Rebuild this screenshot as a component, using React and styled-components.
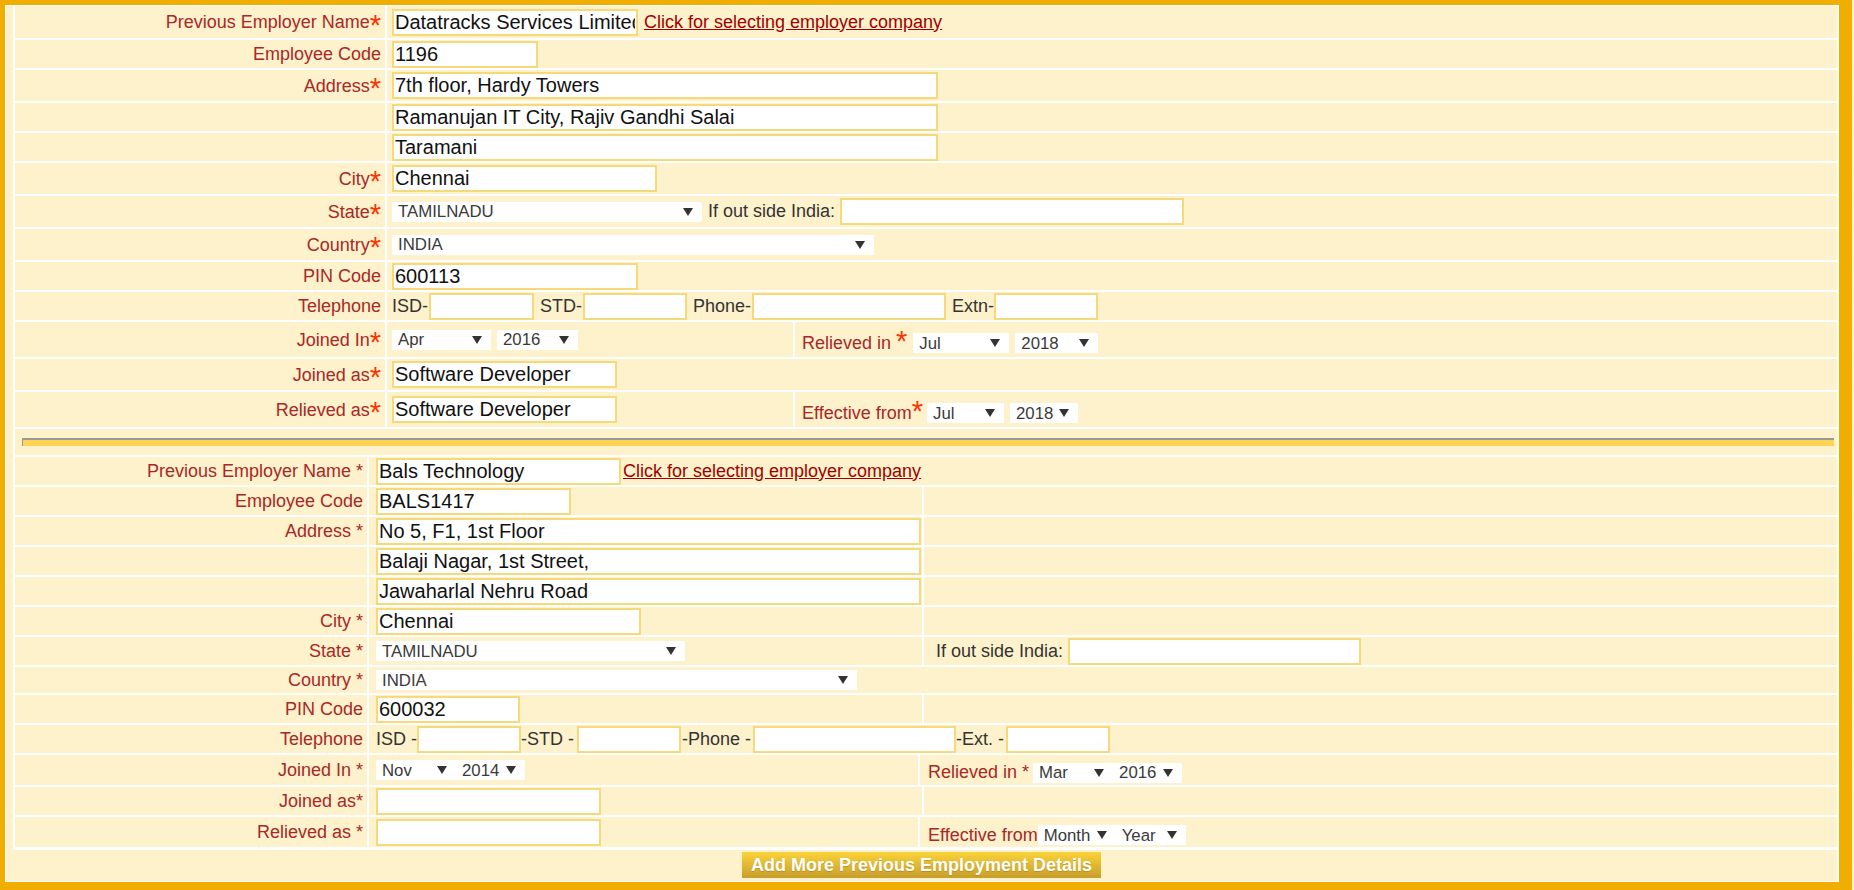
import React from "react";
import styled, { createGlobalStyle } from "styled-components";

const GlobalStyle = createGlobalStyle`
  html, body {
    margin: 0;
    padding: 0;
    background: #fef2cc;
  }
  body {
    font-family: "Liberation Sans", Arial, sans-serif;
    overflow: hidden;
  }
`;

const Frame = styled.div`
  width: 1852px;
  box-sizing: border-box;
  padding: 5px 13px 8px 5px;
  background: #f0af00;
`;

const Panel = styled.div`
  border: 1px solid #fff;
  border-right-width: 2px;
  background: #fef2cc;
`;

const Section = styled.div`
  margin-left: 7px;
  display: flex;
  flex-direction: column;
  gap: 2px;
  background: #fff;
  border-left: 2px solid #fff;
  border-top: ${(p) => p.$top || 0}px solid #fff;
  border-bottom: ${(p) => p.$bottom || 0}px solid #fff;
`;

const Row = styled.div`
  display: grid;
  grid-template-columns: ${(p) => p.$cols};
  column-gap: 2px;
  height: ${(p) => p.$h}px;
`;

const LabelCell = styled.div`
  background: #fef2cc;
  display: flex;
  align-items: center;
  justify-content: flex-end;
  padding: 1px 4px 0 0;
  color: #a82828;
  font-size: 18px;
  white-space: nowrap;
`;

const Cell = styled.div`
  background: #fef2cc;
  display: flex;
  align-items: center;
  gap: ${(p) => p.$gap || 0}px;
  padding-left: ${(p) => p.$pad ?? 5}px;
  padding-top: ${(p) => p.$drop || 0}px;
  font-size: 18px;
  color: #333;
  white-space: nowrap;
  min-width: 0;
  overflow: hidden;
`;

const FieldLabel = styled.span`
  color: #a82828;
`;

const Star = styled.span`
  color: #ff3300;
  font-size: 29px;
  line-height: 0;
  position: relative;
  top: 2px;
`;

const Group = styled.span`
  display: inline-flex;
  align-items: center;
  margin-left: ${(p) => p.$ml || 0}px;
`;

const TextInput = styled.input`
  box-sizing: border-box;
  flex: none;
  width: ${(p) => p.$w}px;
  height: 27px;
  margin: 0 ${(p) => p.$mx || 0}px 0 ${(p) => p.$ml ?? p.$mx ?? 0}px;
  padding: 0 1px;
  border: 2px solid #f6da7a;
  background: #fff;
  font: 20px "Liberation Sans", Arial, sans-serif;
  color: #111;
  outline: none;
`;

const PickLink = styled.a`
  margin-left: ${(p) => p.$gap}px;
  color: #a00000;
  font-size: 18px;
  text-decoration: underline;
  cursor: pointer;
`;

const SelectWrap = styled.span`
  position: relative;
  flex: none;
  display: inline-block;
  width: ${(p) => p.$w}px;
  height: 20px;
  margin-left: ${(p) => p.$ml || 0}px;
  background: #fff;
`;

const NativeSelect = styled.select`
  appearance: none;
  -webkit-appearance: none;
  display: block;
  width: 100%;
  height: 100%;
  margin: 0;
  padding: 0 0 0 6px;
  border: none;
  border-radius: 0;
  outline: none;
  background: transparent;
  font: 16.8px "Liberation Sans", Arial, sans-serif;
  color: #3a3a3a;
`;

const Caret = styled.svg`
  position: absolute;
  right: 9px;
  top: 6px;
  pointer-events: none;
`;

const RuleCell = styled.div`
  grid-column: 1 / -1;
  background: #fef2cc;
  padding: 9px 3px 0 7px;
`;

const Rule = styled.div`
  height: 6px;
  background: #ffd452;
  border-top: 2px solid #9a9a9a;
  border-left: 1px solid #9a9a9a;
`;

const ButtonRow = styled.div`
  height: 31px;
  box-sizing: border-box;
  padding-top: 2px;
  display: flex;
  justify-content: center;
  align-items: flex-start;
`;

const AddButton = styled.button`
  height: 26px;
  padding: 0 9px;
  border: none;
  border-radius: 0;
  background: linear-gradient(#fad33a, #c89e2b);
  color: #fff;
  font: bold 18px "Liberation Sans", Arial, sans-serif;
  text-shadow: 0 1px 1px rgba(90, 60, 0, 0.25);
  cursor: pointer;
`;

const MONTHS = ["Jan", "Feb", "Mar", "Apr", "May", "Jun", "Jul", "Aug", "Sep", "Oct", "Nov", "Dec"];
const YEARS = ["2010", "2011", "2012", "2013", "2014", "2015", "2016", "2017", "2018", "2019"];
const STATES = ["ANDHRA PRADESH", "KARNATAKA", "KERALA", "MAHARASHTRA", "TAMILNADU", "TELANGANA"];

function Select({ w, ml, value, options }) {
  const list = options.includes(value) ? options : [value, ...options];
  return (
    <SelectWrap $w={w} $ml={ml}>
      <NativeSelect defaultValue={value}>
        {list.map((o) => (
          <option key={o}>{o}</option>
        ))}
      </NativeSelect>
      <Caret width="10" height="8" viewBox="0 0 10 8">
        <polygon points="0,0 10,0 5,8" fill="#333" />
      </Caret>
    </SelectWrap>
  );
}

const TOP = "370px 1fr";
const TOP_SPLIT = "370px 406px 1fr";
const BOT = "352px 553px 1fr";
const BOT_SPAN = "352px 1fr";
const BOT_SPLIT = "352px 549px 1fr";

function Req({ children }) {
  return (
    <>
      {children}
      <Star>*</Star>
    </>
  );
}

function FirstEmployer() {
  return (
    <Section>
      <Row $cols={TOP} $h={32}>
        <LabelCell><Req>Previous Employer Name</Req></LabelCell>
        <Cell>
          <TextInput $w={246} defaultValue="Datatracks Services Limited" />
          <PickLink $gap={6}>Click for selecting employer company</PickLink>
        </Cell>
      </Row>
      <Row $cols={TOP} $h={28}>
        <LabelCell>Employee Code</LabelCell>
        <Cell><TextInput $w={146} defaultValue="1196" /></Cell>
      </Row>
      <Row $cols={TOP} $h={31}>
        <LabelCell><Req>Address</Req></LabelCell>
        <Cell><TextInput $w={546} defaultValue="7th floor, Hardy Towers" /></Cell>
      </Row>
      <Row $cols={TOP} $h={28}>
        <LabelCell />
        <Cell><TextInput $w={546} defaultValue="Ramanujan IT City, Rajiv Gandhi Salai" /></Cell>
      </Row>
      <Row $cols={TOP} $h={28}>
        <LabelCell />
        <Cell><TextInput $w={546} defaultValue="Taramani" /></Cell>
      </Row>
      <Row $cols={TOP} $h={31}>
        <LabelCell><Req>City</Req></LabelCell>
        <Cell><TextInput $w={265} defaultValue="Chennai" /></Cell>
      </Row>
      <Row $cols={TOP} $h={31}>
        <LabelCell><Req>State</Req></LabelCell>
        <Cell>
          <Select w={310} value="TAMILNADU" options={STATES} />
          <Group $ml={6}>If out side India:</Group>
          <TextInput $w={344} $ml={5} />
        </Cell>
      </Row>
      <Row $cols={TOP} $h={31}>
        <LabelCell><Req>Country</Req></LabelCell>
        <Cell><Select w={482} value="INDIA" options={["INDIA", "OTHERS"]} /></Cell>
      </Row>
      <Row $cols={TOP} $h={28}>
        <LabelCell>PIN Code</LabelCell>
        <Cell><TextInput $w={246} defaultValue="600113" /></Cell>
      </Row>
      <Row $cols={TOP} $h={28}>
        <LabelCell>Telephone</LabelCell>
        <Cell $gap={6}>
          <Group>ISD-<TextInput $w={105} $ml={1} /></Group>
          <Group>STD-<TextInput $w={104} $ml={1} /></Group>
          <Group>Phone-<TextInput $w={194} $ml={1} /></Group>
          <Group>Extn-<TextInput $w={104} /></Group>
        </Cell>
      </Row>
      <Row $cols={TOP_SPLIT} $h={35}>
        <LabelCell><Req>Joined In</Req></LabelCell>
        <Cell $gap={6}>
          <Select w={99} value="Apr" options={MONTHS} />
          <Select w={81} value="2016" options={YEARS} />
        </Cell>
        <Cell $pad={7} $drop={7}>
          <FieldLabel>Relieved in <Star>*</Star></FieldLabel>
          <Select w={96} ml={6} value="Jul" options={MONTHS} />
          <Select w={83} ml={6} value="2018" options={YEARS} />
        </Cell>
      </Row>
      <Row $cols={TOP} $h={31}>
        <LabelCell><Req>Joined as</Req></LabelCell>
        <Cell><TextInput $w={225} defaultValue="Software Developer" /></Cell>
      </Row>
      <Row $cols={TOP_SPLIT} $h={35}>
        <LabelCell><Req>Relieved as</Req></LabelCell>
        <Cell><TextInput $w={225} defaultValue="Software Developer" /></Cell>
        <Cell $pad={7} $drop={7}>
          <FieldLabel><Req>Effective from</Req></FieldLabel>
          <Select w={77} ml={4} value="Jul" options={MONTHS} />
          <Select w={68} ml={6} value="2018" options={YEARS} />
        </Cell>
      </Row>
      <Row $cols="1fr" $h={26}>
        <RuleCell>
          <Rule />
        </RuleCell>
      </Row>
    </Section>
  );
}

function SecondEmployer() {
  return (
    <Section $top={2} $bottom={3}>
      <Row $cols={BOT_SPAN} $h={28}>
        <LabelCell>Previous Employer Name *</LabelCell>
        <Cell $pad={7}>
          <TextInput $w={245} defaultValue="Bals Technology" />
          <PickLink $gap={2}>Click for selecting employer company</PickLink>
        </Cell>
      </Row>
      <Row $cols={BOT} $h={28}>
        <LabelCell>Employee Code</LabelCell>
        <Cell $pad={7}><TextInput $w={195} defaultValue="BALS1417" /></Cell>
        <Cell />
      </Row>
      <Row $cols={BOT} $h={28}>
        <LabelCell>Address *</LabelCell>
        <Cell $pad={7}><TextInput $w={545} defaultValue="No 5, F1, 1st Floor" /></Cell>
        <Cell />
      </Row>
      <Row $cols={BOT} $h={28}>
        <LabelCell />
        <Cell $pad={7}><TextInput $w={545} defaultValue="Balaji Nagar, 1st Street," /></Cell>
        <Cell />
      </Row>
      <Row $cols={BOT} $h={28}>
        <LabelCell />
        <Cell $pad={7}><TextInput $w={545} defaultValue="Jawaharlal Nehru Road" /></Cell>
        <Cell />
      </Row>
      <Row $cols={BOT} $h={28}>
        <LabelCell>City *</LabelCell>
        <Cell $pad={7}><TextInput $w={265} defaultValue="Chennai" /></Cell>
        <Cell />
      </Row>
      <Row $cols={BOT} $h={28}>
        <LabelCell>State *</LabelCell>
        <Cell $pad={7}><Select w={309} value="TAMILNADU" options={STATES} /></Cell>
        <Cell $pad={12}>
          If out side India:
          <TextInput $w={293} $ml={5} />
        </Cell>
      </Row>
      <Row $cols={BOT_SPAN} $h={26}>
        <LabelCell>Country *</LabelCell>
        <Cell $pad={7}><Select w={481} value="INDIA" options={["INDIA", "OTHERS"]} /></Cell>
      </Row>
      <Row $cols={BOT} $h={28}>
        <LabelCell>PIN Code</LabelCell>
        <Cell $pad={7}><TextInput $w={144} defaultValue="600032" /></Cell>
        <Cell />
      </Row>
      <Row $cols={BOT_SPAN} $h={28}>
        <LabelCell>Telephone</LabelCell>
        <Cell $pad={7}>
          ISD -<TextInput $w={104} />
          -STD -<TextInput $w={104} $mx={1} $ml={3} />
          -Phone -<TextInput $w={203} $ml={2} />
          -Ext. -<TextInput $w={104} $ml={2} />
        </Cell>
      </Row>
      <Row $cols={BOT_SPLIT} $h={30}>
        <LabelCell>Joined In *</LabelCell>
        <Cell $pad={7}>
          <Select w={80} value="Nov" options={MONTHS} />
          <Select w={69} value="2014" options={YEARS} />
        </Cell>
        <Cell $pad={8} $drop={5}>
          <FieldLabel>Relieved in *</FieldLabel>
          <Select w={80} ml={4} value="Mar" options={MONTHS} />
          <Select w={69} value="2016" options={YEARS} />
        </Cell>
      </Row>
      <Row $cols={BOT} $h={28}>
        <LabelCell>Joined as*</LabelCell>
        <Cell $pad={7}><TextInput $w={225} /></Cell>
        <Cell />
      </Row>
      <Row $cols={BOT_SPLIT} $h={30}>
        <LabelCell>Relieved as *</LabelCell>
        <Cell $pad={7}><TextInput $w={225} /></Cell>
        <Cell $pad={8} $drop={6}>
          <FieldLabel>Effective from</FieldLabel>
          <Select w={78} value="Month" options={["Month", ...MONTHS]} />
          <Select w={70} value="Year" options={["Year", ...YEARS]} />
        </Cell>
      </Row>
    </Section>
  );
}

export default function App() {
  return (
    <>
      <GlobalStyle />
      <Frame>
        <Panel>
          <FirstEmployer />
          <SecondEmployer />
          <ButtonRow>
            <AddButton type="button">Add More Previous Employment Details</AddButton>
          </ButtonRow>
        </Panel>
      </Frame>
    </>
  );
}
